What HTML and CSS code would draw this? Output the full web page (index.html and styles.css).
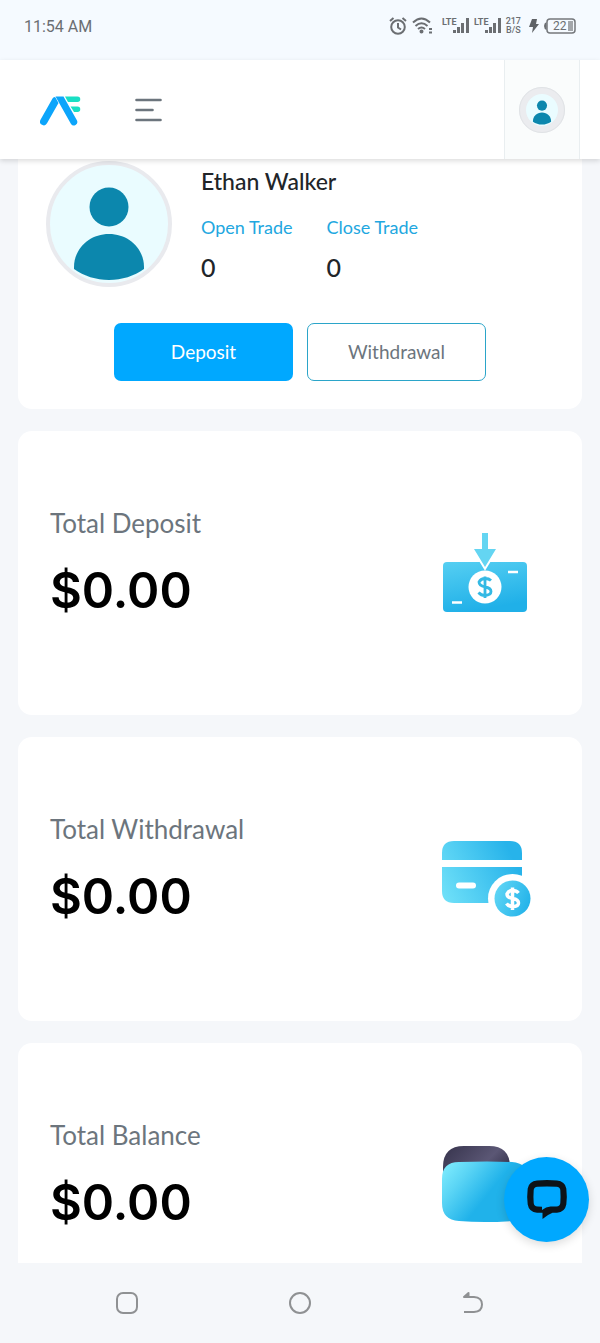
FILE: index.html
```html
<!DOCTYPE html>
<html lang="en">
<head>
<meta charset="utf-8">
<meta name="viewport" content="width=device-width, initial-scale=1">
<title>Dashboard</title>
<link rel="stylesheet" href="styles.css">
</head>
<body>
<svg width="0" height="0" class="defs" aria-hidden="true">
  <defs>
    <linearGradient id="note" x1="0" y1="0" x2="0.3" y2="1"><stop offset="0" stop-color="#56cff2"/><stop offset="1" stop-color="#20b0e8"/></linearGradient>
    <linearGradient id="card" gradientUnits="userSpaceOnUse" x1="22" y1="70" x2="92" y2="36"><stop offset="0" stop-color="#6ddff8"/><stop offset="1" stop-color="#27b3ea"/></linearGradient>
    <linearGradient id="coin" x1="0" y1="0.3" x2="1" y2="0.7"><stop offset="0" stop-color="#5fd5f5"/><stop offset="1" stop-color="#22b2e9"/></linearGradient>
    <linearGradient id="wallet" gradientUnits="userSpaceOnUse" x1="22" y1="40" x2="62" y2="72"><stop offset="0" stop-color="#7ceafd"/><stop offset="0.4" stop-color="#5bd5f5"/><stop offset="1" stop-color="#20b2ea"/></linearGradient>
    <linearGradient id="flap" x1="0" y1="0" x2="1" y2="0.5"><stop offset="0" stop-color="#36334c"/><stop offset="0.7" stop-color="#5b5775"/><stop offset="1" stop-color="#3b3852"/></linearGradient>
    <symbol id="person" viewBox="0 0 116 116">
      <circle cx="58" cy="41" r="19.5"/>
      <path d="M23 101C23 83 38 68 58 68s35 15 35 33v2c-10 7-22 11-35 11s-25-4-35-11z"/>
    </symbol>
  </defs>
</svg>

<div class="status">
  <time class="clock">11:54 AM</time>
  <div class="indicators">
    <svg class="alarm" width="18" height="18" viewBox="0 0 18 18" fill="none" stroke="#6b6e72" stroke-width="2"><circle cx="9" cy="10" r="6.8"/><path d="M9 6v4.500l3 2M1 4l3.500-3M17 4l-3.500-3"/></svg>
    <svg class="wifi" width="21" height="18" viewBox="0 0 21 18" fill="none" stroke="#6b6e72" stroke-width="2"><path d="M1 5.500Q9.500-2.500 18 5.500M3.500 9Q9.500 3.500 15.500 9M6 12Q9.500 9 13 12"/><circle cx="9.500" cy="14.500" r="1" fill="#6b6e72"/><path d="M17 12h3M17 15.500h3"/></svg>
    <svg class="signal" width="27" height="18" viewBox="0 0 27 18"><text x="0" y="8" class="lte">LTE</text><path d="M11 13h3v3h-3zM15 10h3v6h-3zM19 6h3v10h-3zM24 1h3v15h-3z" fill="#6b6e72"/></svg>
    <svg class="signal" width="27" height="18" viewBox="0 0 27 18"><text x="0" y="8" class="lte">LTE</text><path d="M11 13h3v3h-3zM15 10h3v6h-3zM19 6h3v10h-3zM24 1h3v15h-3z" fill="#6b6e72"/></svg>
    <div class="rate"><span>217</span><span>B/S</span></div>
    <svg class="bolt" width="10" height="16" viewBox="0 0 10 16"><path d="M3 1h5L7 6h3L3 15l1-6H0z" fill="#5f6266"/></svg>
    <svg width="32" height="18" viewBox="0 0 32 18"><rect x="3" y="2" width="28" height="14" rx="3" fill="none" stroke="#75787c" stroke-width="1.500"/><path d="M2.500 5Q0 6 0 9t2.500 4z" fill="#6b6e72"/><rect x="24" y="4" width="5" height="10" fill="#a3a6aa"/><text x="9" y="13" class="level">22</text></svg>
  </div>
</div>

<header class="topbar">
  <a class="brand" href="#" aria-label="Home">
    <svg width="41" height="33" viewBox="0 0 41 33">
      <path d="M25 3.500h12.500a2.700 2.700 0 0 1 0 5.500H28zM30.500 13.500h7a2.700 2.700 0 0 1 0 5.500H34z" fill="#19dfc4"/>
      <path d="M12.500 5.500Q14 3 15.500 4.500L18.500 10 7 30.300a3.600 3.600 0 0 1-6.500-3.500z" fill="#0ca5fb"/>
      <path d="M15.500 3.500h8L37 27.500a3.500 3.500 0 0 1-6 3.500z" fill="#0ca5fb"/>
    </svg>
  </a>
  <button class="menu" type="button" aria-label="Menu">
    <svg width="27" height="24" viewBox="0 0 27 24"><path d="M1.500 2h24M1.500 12h16M1.500 22h24" stroke="#6c757d" stroke-width="2.600" stroke-linecap="round"/></svg>
  </button>
  <button class="account" type="button" aria-label="Account">
    <span class="avatar-small"><svg width="30" height="30"><use href="#person"/></svg></span>
  </button>
</header>

<main class="content">
  <section class="profile">
    <div class="profile-head">
      <div class="avatar"><svg width="116" height="116" role="img" aria-label="Profile picture"><use href="#person"/></svg></div>
      <div class="profile-info">
        <h1 class="name">Ethan Walker</h1>
        <dl class="trades">
          <div><dt>Open Trade</dt><dd>0</dd></div>
          <div><dt>Close Trade</dt><dd>0</dd></div>
        </dl>
      </div>
    </div>
    <div class="actions">
      <button class="btn btn-primary" type="button">Deposit</button>
      <button class="btn btn-outline" type="button">Withdrawal</button>
    </div>
  </section>

  <section class="total">
    <div>
      <h2 class="total-label">Total Deposit</h2>
      <p class="total-value">$0.00</p>
    </div>
    <svg class="total-icon" width="130" height="120" viewBox="0 3 130 120" aria-hidden="true">
      <rect x="23" y="52" width="84" height="50" rx="4" fill="url(#note)"/>
      <path d="M62 23h6v16h8L65 57 54 39h8z" fill="#64d5f2" stroke="#fff" stroke-width="4" paint-order="stroke"/>
      <circle cx="65" cy="77" r="16.500" fill="#fff"/>
      <path d="M88 62h10M32 92.500h10" stroke="#fff" stroke-width="2.500"/>
      <path d="M71 70.500q-2-2-6-2t-6 3.500q0 3.500 6 5 6 1 6 4.500t-6 4q-4 0-6.500-3M65 66.500v21.500" fill="none" stroke="#34b9e4" stroke-width="2.800"/>
    </svg>
  </section>

  <section class="total">
    <div>
      <h2 class="total-label">Total Withdrawal</h2>
      <p class="total-value">$0.00</p>
    </div>
    <svg class="total-icon" width="130" height="120" viewBox="0 -1 130 120" aria-hidden="true">
      <path d="M22 40V33q0-12 12-12h56q12 0 12 12v7zM22 47h80v24H90v12H34q-12 0-12-12z" fill="url(#card)"/>
      <circle cx="92.500" cy="78.500" r="24.500" fill="#fff"/>
      <circle cx="92.500" cy="78.500" r="18" fill="url(#coin)"/>
      <path d="M39 65.500h14" stroke="#fff" stroke-width="6" stroke-linecap="round"/>
      <path d="M98.500 73q-2-2.500-6-2.500T87 74q0 3.500 5.500 4.500 6 1 6 4.500t-6 3.500q-4 0-6-3M92.500 67.500v22.500" fill="none" stroke="#fff" stroke-width="3.500"/>
    </svg>
  </section>

  <section class="total">
    <div>
      <h2 class="total-label">Total Balance</h2>
      <p class="total-value">$0.00</p>
    </div>
    <svg class="total-icon" width="130" height="120" viewBox="0 -5 130 120" aria-hidden="true">
      <path d="M23 50V37Q23 16 44 16h25q21 0 21 21v13z" fill="url(#flap)"/>
      <path d="M22 49Q22 32 39 32q30-1 53 0 16 1 16 17v24q0 17-16 18-28 2-53 0-17-1-17-18z" fill="url(#wallet)"/>
    </svg>
  </section>

  <button class="chat" type="button" aria-label="Open chat">
    <svg width="42" height="42" viewBox="0 0 42 42"><path d="M11 1.600Q21 .6 31 1.600 39 2.400 40.300 9.500 41.300 17.500 40.300 25.500 39 33 31 33.800H26.500Q21 36 16.500 40V33.800H11Q3 33 1.700 25.500.7 17.500 1.700 9.500 3 2.400 11 1.600zM11.500 7.800Q8 8 7.700 11 7.200 17.500 7.700 24 8 27.200 11.500 27.500L16 27.800V31Q20 28 24.500 27.600L30.500 27.500Q34 27.200 34.300 24 34.800 17.500 34.300 11 34 8 30.500 7.800 21 7.200 11.500 7.800z" fill="#0d1319" fill-rule="evenodd"/></svg>
  </button>
</main>

<nav class="sysnav" aria-label="System">
  <button type="button" aria-label="Recent apps"><svg width="24" height="24" viewBox="0 0 24 24"><rect x="2" y="2" width="20" height="20" rx="6"/></svg></button>
  <button type="button" aria-label="Home screen"><svg width="24" height="24" viewBox="0 0 24 24"><circle cx="12" cy="12" r="10"/></svg></button>
  <button type="button" aria-label="Back"><svg width="24" height="24" viewBox="0 0 24 24"><path d="M3 21h10q8-.5 8-7.500T13 6H3"/><path d="M3 6l4.500-4v4z" fill="#8f9193"/></svg></button>
</nav>
</body>
</html>
```
FILE: styles.css
```css
* {
  box-sizing: border-box;
}

body {
  margin: 0;
  height: 100vh;
  display: flex;
  flex-direction: column;
  background: #f5f7fa;
  color: #212529;
  font-family: Lato, "Liberation Sans", sans-serif;
}

h1, h2, p, dl, dd {
  margin: 0;
}

button {
  border: 0;
  padding: 0;
  background: none;
  font: inherit;
  cursor: pointer;
}

svg {
  display: block;
}

.defs {
  position: absolute;
}

/* Status bar */
.status {
  flex: none;
  height: 60px;
  padding: 0 24px 8px;
  display: flex;
  align-items: center;
  justify-content: space-between;
  background: #f5faff;
  color: #6b6e72;
  font-family: Roboto, sans-serif;
}

.clock {
  font-size: 16px;
}

.indicators {
  display: flex;
  align-items: center;
  gap: 5px;
}

.wifi {
  margin-right: 4px;
}

.lte {
  font-size: 9px;
  font-weight: 700;
  fill: #6b6e72;
}

.level {
  font-size: 12px;
  fill: #6b6e72;
}

.rate {
  display: flex;
  flex-direction: column;
  align-items: center;
  font-size: 9px;
  line-height: 9px;
  font-weight: 500;
}

.bolt {
  margin-left: 3px;
}

/* Top bar */
.topbar {
  position: relative;
  z-index: 1;
  flex: none;
  height: 99px;
  padding: 0 20px 0 40px;
  display: flex;
  align-items: center;
  background: #fff;
  box-shadow: 0 2px 5px rgba(0, 0, 0, 0.14);
}

.menu {
  margin-left: 54px;
}

.account {
  margin-left: auto;
  width: 76px;
  height: 100%;
  display: grid;
  place-items: center;
  background: #fafcfc;
  border: solid #e9eef0;
  border-width: 0 1px;
}

.avatar-small {
  display: block;
  padding: 1px;
  border: 7px solid #ebecef;
  border-radius: 50%;
  background: #eafcff;
  fill: #0c87ad;
  outline: 1px solid #e0e3e6;
  outline-offset: -1px;
}

/* Page content */
.content {
  position: relative;
  flex: 1;
  min-height: 0;
  overflow: hidden;
  padding: 0 18px;
  display: flex;
  flex-direction: column;
  gap: 22px;
}

.profile {
  flex: none;
  padding: 2px 28px 28px;
  background: #fff;
  border-radius: 0 0 14px 14px;
}

.profile-head {
  display: flex;
  gap: 29px;
}

.avatar {
  flex: none;
  padding: 1px;
  border: 4px solid #e9eaee;
  border-radius: 50%;
  background: #eafcff;
  fill: #0c87ad;
}

.profile-info {
  padding-top: 4px;
}

.name {
  margin-bottom: 18px;
  font-size: 23px;
  line-height: 32px;
  font-weight: 500;
}

.trades {
  display: flex;
  gap: 34px;
}

.trades dt {
  margin-bottom: 12px;
  font-size: 18px;
  line-height: 24px;
  color: #22a7e0;
}

.trades dd {
  font-size: 25px;
  line-height: 32px;
  font-weight: 500;
}

.actions {
  margin-top: 36px;
  display: flex;
  justify-content: center;
  gap: 14px;
}

.btn {
  width: 179px;
  height: 58px;
  padding-bottom: 2px;
  border-radius: 7px;
  font-size: 19px;
}

.btn-primary {
  background: #00a8ff;
  color: #fff;
}

.btn-outline {
  border: 1px solid #2ba5c9;
  color: #6c757d;
}

.total {
  flex: none;
  padding: 74px 32px;
  display: flex;
  align-items: center;
  justify-content: space-between;
  background: #fff;
  border-radius: 14px;
}

.total-label {
  margin-bottom: 20px;
  font-size: 26px;
  line-height: 36px;
  font-weight: 400;
  color: #6c757d;
}

.total-value {
  margin-bottom: 20px;
  font-family: Inter, Lato, sans-serif;
  font-size: 49px;
  line-height: 60px;
  font-weight: 600;
  color: #000;
}

.total-icon {
  flex: none;
}

.chat {
  position: absolute;
  right: 11px;
  bottom: 21px;
  width: 85px;
  height: 85px;
  display: grid;
  place-items: center;
  border-radius: 50%;
  background: #00a8ff;
  box-shadow: 0 3px 10px rgba(0, 0, 0, 0.14);
}

/* System navigation */
.sysnav {
  flex: none;
  height: 80px;
  padding: 0 40px;
  display: grid;
  grid-template-columns: repeat(3, 1fr);
  place-items: center;
  background: #f5f7fa;
  fill: none;
  stroke: #8f9193;
  stroke-width: 2;
  stroke-linejoin: round;
}
```
